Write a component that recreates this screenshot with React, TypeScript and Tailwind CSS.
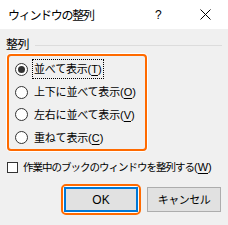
const FONT = "font-['Noto_Sans_CJK_JP','Noto_Sans',sans-serif]";

const OPTIONS = [
  { label: "並べて表示", key: "T", checked: true },
  { label: "上下に並べて表示", key: "O", checked: false },
  { label: "左右に並べて表示", key: "V", checked: false },
  { label: "重ねて表示", key: "C", checked: false },
];

function Radio({ checked }: { checked: boolean }) {
  return (
    <span className="w-[13px] h-[13px] rounded-full border border-[#333] bg-white flex items-center justify-center shrink-0">
      {checked && <span className="w-[7px] h-[7px] rounded-full bg-[#333]" />}
    </span>
  );
}

function Key({ k }: { k: string }) {
  return (
    <span className="font-['Liberation_Sans',sans-serif] text-[11px] tracking-normal">
      (<span className="underline underline-offset-2">{k}</span>)
    </span>
  );
}

export default function App() {
  return (
    <div className={`w-[228px] h-[225px] bg-[#f0f0f0] flex flex-col text-black leading-none ${FONT}`}>
      {/* title bar */}
      <div className="h-[29px] bg-white flex items-center shrink-0">
        <span className="pl-[8px] text-[12px] tracking-[-1.3px] flex-1">ウィンドウの整列</span>
        <span className="text-[12px] w-[8px] font-['Liberation_Sans',sans-serif]">?</span>
        <svg className="ml-[37px] mr-[17px]" width="11" height="11" viewBox="0 0 11 11">
          <path d="M0.5 0.5L10.5 10.5M10.5 0.5L0.5 10.5" stroke="#000" strokeWidth="1" />
        </svg>
      </div>

      <div className="flex items-center mt-[9px] pl-[6px] pr-[6px]">
        <span className="text-[12px] tracking-[-0.5px]">整列</span>
        <span className="flex-1 h-px bg-[#dcdcdc] ml-[6px] mt-[2px]" />
      </div>

      <div className="ml-[7px] mt-[4px] w-[140px] h-[97px] border-2 border-[#ff6a00] rounded-[4px] shadow-[0_0_0_1px_#fff] pl-[6px] pt-[2px] flex flex-col">
        {OPTIONS.map((o) => (
          <div key={o.key} className="h-[23px] flex items-center gap-[5px] text-[11px] tracking-[-0.2px] whitespace-nowrap">
            <Radio checked={o.checked} />
            <span
              className={`px-[1px] py-[3px] ${o.checked ? "outline outline-1 outline-dotted outline-black" : ""}`}
            >
              {o.label}
              <Key k={o.key} />
            </span>
          </div>
        ))}
      </div>

      <div className="flex items-center mt-[11px] pl-[7px] gap-[5px] whitespace-nowrap">
        <span className="w-[11px] h-[11px] border border-[#333] bg-white shrink-0" />
        <span className="text-[10.5px] tracking-[-1px]">
          作業中のブックのウィンドウを整列する
          <Key k="W" />
        </span>
      </div>

      <div className="flex justify-end items-center mt-[11px] pr-[7px] gap-[6px]">
        <div className="border-2 border-[#ff6a00] rounded-[5px] bg-white p-px">
          <button className="w-[74px] h-[25px] bg-[#e1e1e1] border-2 border-[#0078d7] text-[12px] font-['Liberation_Sans',sans-serif] flex items-center justify-center">
            OK
          </button>
        </div>
        <button className="w-[74px] h-[25px] bg-[#e1e1e1] border border-[#adadad] text-[11px] tracking-[-0.5px] flex items-center justify-center">
          キャンセル
        </button>
      </div>
    </div>
  );
}
